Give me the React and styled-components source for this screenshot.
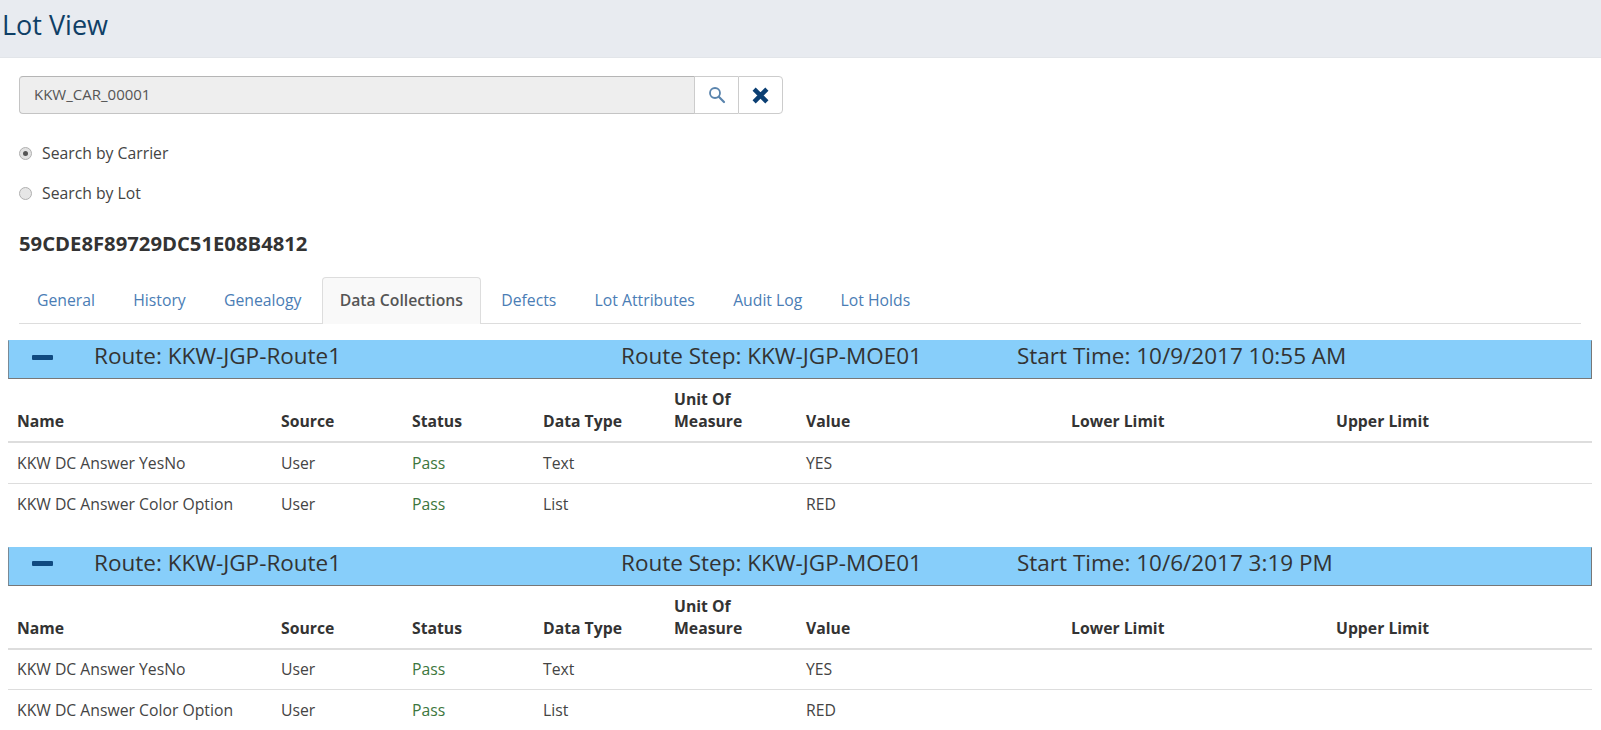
import styled, { createGlobalStyle } from "styled-components";

const GlobalStyle = createGlobalStyle`
  html, body {
    margin: 0;
    height: 730px;
    overflow: hidden;
    background: #fff;
  }
  body {
    font-family: "Open Sans", "Liberation Sans", sans-serif;
    font-size: 15.75px;
    color: #333;
  }
  * {
    box-sizing: border-box;
  }
`;

const tabs = [
  "General",
  "History",
  "Genealogy",
  "Data Collections",
  "Defects",
  "Lot Attributes",
  "Audit Log",
  "Lot Holds",
];

const columns = [
  { label: "Name", width: 264 },
  { label: "Source", width: 131 },
  { label: "Status", width: 131 },
  { label: "Data Type", width: 131 },
  { label: "Unit Of Measure", width: 132 },
  { label: "Value", width: 265 },
  { label: "Lower Limit", width: 265 },
  { label: "Upper Limit", width: 265 },
];

const rows = [
  { name: "KKW DC Answer YesNo", type: "Text", value: "YES" },
  { name: "KKW DC Answer Color Option", type: "List", value: "RED" },
];

const collections = [
  { id: 1, start: "10/9/2017 10:55 AM" },
  { id: 2, start: "10/6/2017 3:19 PM" },
];

function App() {
  return (
    <>
      <GlobalStyle />
      <Header>
        <Title>Lot View</Title>
      </Header>
      <Content>
        <SearchArea>
          <SearchGroup>
            <SearchInput defaultValue="KKW_CAR_00001" />
            <IconButton>
              <svg width="18" height="18" viewBox="0 0 18 18" fill="none" stroke="#5a84ad" strokeWidth="1.8">
                <circle cx="7" cy="7" r="5" />
                <path d="M10.8 10.8 L16 16" strokeWidth="2.2" strokeLinecap="round" />
              </svg>
            </IconButton>
            <ClearButton>
              <svg width="17" height="17" viewBox="0 0 16 16" fill="none" stroke="#0b3f73" strokeWidth="4.2">
                <path d="M2 2 L14 14 M14 2 L2 14" />
              </svg>
            </ClearButton>
          </SearchGroup>
          <RadioRow>
            <Radio $checked />
            Search by Carrier
          </RadioRow>
          <RadioRow>
            <Radio />
            Search by Lot
          </RadioRow>
          <LotId>59CDE8F89729DC51E08B4812</LotId>
          <TabList>
            {tabs.map((tab) => (
              <Tab key={tab} $active={tab === "Data Collections"}>
                {tab}
              </Tab>
            ))}
          </TabList>
        </SearchArea>
        {collections.map((item) => (
          <Collection key={item.id}>
            <RouteBar>
              <Collapse />
              <span>Route: KKW-JGP-Route1</span>
              <span>Route Step: KKW-JGP-MOE01</span>
              <span>Start Time: {item.start}</span>
            </RouteBar>
            <Table>
              <colgroup>
                {columns.map((col) => (
                  <col key={col.label} width={col.width} />
                ))}
              </colgroup>
              <thead>
                <tr>
                  {columns.map((col) => (
                    <Th key={col.label}>{col.label}</Th>
                  ))}
                </tr>
              </thead>
              <tbody>
                {rows.map((row) => (
                  <tr key={row.name}>
                    <Td>{row.name}</Td>
                    <Td>User</Td>
                    <PassCell>Pass</PassCell>
                    <Td>{row.type}</Td>
                    <Td />
                    <Td>{row.value}</Td>
                    <Td />
                    <Td />
                  </tr>
                ))}
              </tbody>
            </Table>
          </Collection>
        ))}
      </Content>
    </>
  );
}

const Header = styled.header`
  height: 58px;
  background: #e8ebf0;
  border-bottom: 1px solid #e2e5e9;
  padding: 7px 0 0 2px;
`;

const Title = styled.h1`
  margin: 0;
  font-size: 27px;
  font-weight: 400;
  line-height: 36px;
  color: #0f3f66;
`;

const Content = styled.main`
  padding: 18px 9px 0 8px;
`;

const SearchArea = styled.div`
  padding: 0 11px;
`;

const SearchGroup = styled.div`
  display: flex;
  width: 764px;
  height: 38px;
`;

const SearchInput = styled.input`
  flex: 1;
  min-width: 0;
  height: 38px;
  padding: 0 14px 2px;
  border: 1px solid #c4c4c4;
  border-top-color: #b5b5b5;
  border-right: 0;
  border-radius: 4px 0 0 4px;
  background: #eeeeee;
  font: 15px "Open Sans", "Liberation Sans", sans-serif;
  color: #555;
`;

const IconButton = styled.button`
  display: flex;
  align-items: center;
  justify-content: center;
  width: 44px;
  padding: 0;
  background: #fff;
  border: 1px solid #ccc;
  border-right: 0;
`;

const ClearButton = styled(IconButton)`
  width: 45px;
  border-right: 1px solid #ccc;
  border-radius: 0 4px 4px 0;
`;

const RadioRow = styled.label`
  display: flex;
  align-items: center;
  height: 20px;
  margin-top: 20px;
  color: #444;

  &:first-of-type {
    margin-top: 29px;
  }
`;

const Radio = styled.span`
  position: relative;
  width: 13px;
  height: 13px;
  margin-right: 10px;
  border: 1px solid #b0b0b0;
  border-radius: 50%;
  background: ${(p) => (p.$checked ? "#e2e2e2" : "#e6e6e6")};

  &::after {
    content: "";
    display: ${(p) => (p.$checked ? "block" : "none")};
    position: absolute;
    left: 3px;
    top: 3px;
    width: 5px;
    height: 5px;
    border-radius: 50%;
    background: #555;
  }
`;

const LotId = styled.h2`
  margin: 28px 0 0;
  font-size: 20.25px;
  line-height: 25px;
  font-weight: 700;
  color: #333;
`;

const TabList = styled.nav`
  display: flex;
  height: 47px;
  margin-top: 21px;
  border-bottom: 1px solid #ddd;
`;

const Tab = styled.a`
  height: 47px;
  padding: 12px 17px 0;
  margin-right: 2.25px;
  line-height: 20px;
  border: 1px solid ${(p) => (p.$active ? "#ddd" : "transparent")};
  border-bottom: 0;
  border-radius: 4px 4px 0 0;
  background: ${(p) => (p.$active ? "#f9f9f9" : "transparent")};
  color: ${(p) => (p.$active ? "#555" : "#4a7db5")};
  font-weight: ${(p) => (p.$active ? 600 : 400)};
`;

const Collection = styled.section`
  margin-top: 16px;

  & + & {
    margin-top: 22.5px;
  }
`;

const RouteBar = styled.div`
  display: grid;
  grid-template-columns: 62px 527px 396px 1fr;
  align-items: center;
  height: 39px;
  padding: 0 0 8px 23px;
  background: #87cefa;
  border: 1px solid #777;
  border-top-color: #87cefa;
  border-left-color: #7a8a96;
  font-size: 22.5px;
  line-height: 30px;
  white-space: nowrap;
  color: #333;
`;

const Collapse = styled.i`
  display: block;
  width: 21px;
  height: 5px;
  margin-top: 2px;
  background: #0f4a80;
  border-radius: 1px;
`;

const Table = styled.table`
  width: 100%;
  table-layout: fixed;
  border-collapse: collapse;
`;

const Th = styled.th`
  height: 63px;
  padding: 0 9px 9px;
  text-align: left;
  vertical-align: bottom;
  line-height: 22px;
  font-weight: 700;
  color: #333;
  border-bottom: 2px solid #ddd;
`;

const Td = styled.td`
  height: 41px;
  padding: 0 9px;
  line-height: 20px;
  color: #444;
  border-top: 1px solid #ddd;

  tr:first-child > & {
    border-top: 0;
  }
`;

const PassCell = styled(Td)`
  color: #3c763d;
`;

export default App;
